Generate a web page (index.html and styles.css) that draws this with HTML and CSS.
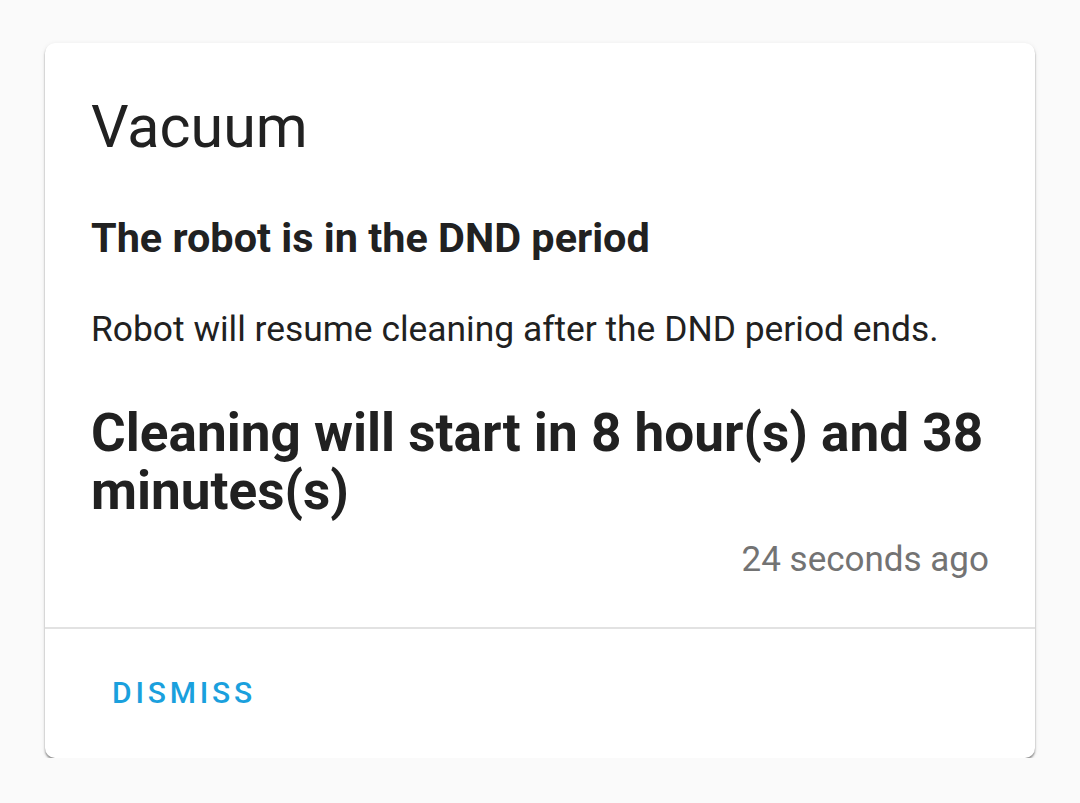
FILE: index.html
```html
<!DOCTYPE html>
<html lang="en">
<head>
<meta charset="utf-8">
<title>Vacuum</title>
<link rel="stylesheet" href="styles.css">
</head>
<body>
<div class="page">
  <div class="card">
    <div class="card-content">
      <h1 class="title">Vacuum</h1>
      <h3 class="subhead">The robot is in the DND period</h3>
      <p class="body-text">Robot will resume cleaning after the DND period ends.</p>
      <h2 class="headline">Cleaning will start in 8 hour(s) and 38 minutes(s)</h2>
      <div class="time">24 seconds ago</div>
    </div>
    <div class="card-actions">
      <button class="btn">DISMISS</button>
    </div>
  </div>
</div>
</body>
</html>
```
FILE: styles.css
```css
html, body {
  margin: 0;
  padding: 0;
  background: #fafafa;
  font-family: Roboto, "Noto Sans", Arial, sans-serif;
  color: #212121;
}
.page {
  padding: 43px 0 0 45px;
}
.card {
  width: 990px;
  height: 715px;
  background: #ffffff;
  border-radius: 10px;
  box-shadow: 0 2px 2px rgba(0,0,0,0.42), 0 1px 5px rgba(0,0,0,0.08);
  display: flex;
  flex-direction: column;
  box-sizing: border-box;
}
.card-content {
  padding: 44px 44px 43px 46px;
  border-bottom: 2px solid #e2e2e2;
}
.title {
  margin: 0;
  font-size: 59.2px;
  line-height: 80px;
  font-weight: 400;
}
.subhead {
  margin: 47px 0 0 0;
  font-size: 41.4px;
  line-height: 48px;
  font-weight: 700;
}
.body-text {
  margin: 43px 0 0 0;
  font-size: 35.4px;
  line-height: 48px;
  font-weight: 400;
}
.headline {
  margin: 51px 0 0 0;
  font-size: 53.1px;
  line-height: 58px;
  font-weight: 700;
}
.time {
  margin-top: 16px;
  font-size: 35px;
  line-height: 48px;
  color: #737373;
  text-align: right;
  padding-right: 2px;
}
.card-actions {
  padding: 44px 46px 0 46px;
}
.btn {
  background: none;
  border: none;
  padding: 0 0 0 21px;
  margin: 0;
  font-family: Roboto, "Noto Sans", Arial, sans-serif;
  font-size: 30px;
  line-height: 40px;
  font-weight: 500;
  letter-spacing: 3.8px;
  color: #1aa0dd;
  cursor: pointer;
}
```
